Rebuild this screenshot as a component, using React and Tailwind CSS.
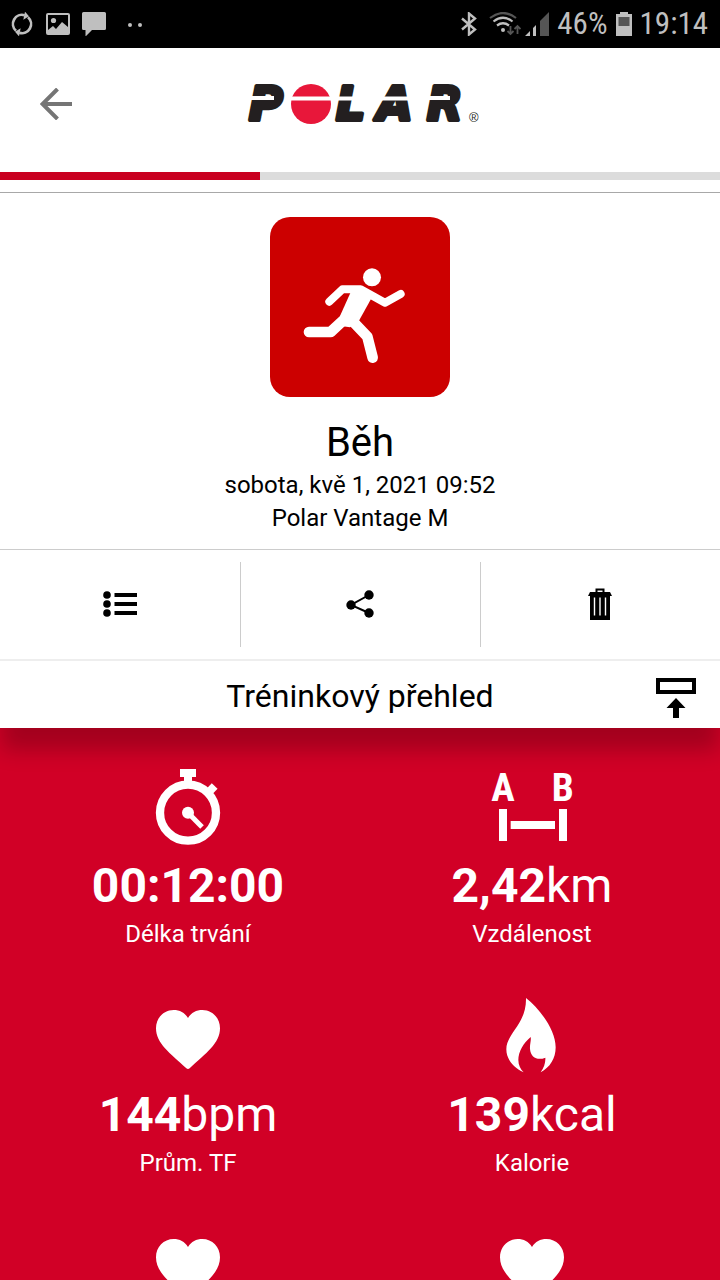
const NARROW = "'Roboto Condensed', 'Liberation Sans Narrow', Roboto, sans-serif";

const metrics = [
  { id: 'duration', icon: StopwatchIcon, value: '00:12:00', unit: '', label: 'Délka trvání' },
  { id: 'distance', icon: DistanceIcon, value: '2,42', unit: 'km', label: 'Vzdálenost' },
  { id: 'avg-hr', icon: HeartIcon, value: '144', unit: 'bpm', label: 'Prům. TF' },
  { id: 'calories', icon: FlameIcon, value: '139', unit: 'kcal', label: 'Kalorie' },
  { id: 'max-hr', icon: HeartIcon, value: '', unit: '', label: '' },
  { id: 'min-hr', icon: HeartIcon, value: '', unit: '', label: '' },
];

function StopwatchIcon() {
  return (
    <svg className="size-20" viewBox="24 51 240 240" fill="none" stroke="white" aria-hidden="true">
      <circle cx="144" cy="188" r="84" strokeWidth="25" />
      <path d="M120 57h48v24h-12v20h-24V81h-12z" fill="white" stroke="none" />
      <path d="M201 132l23-24" strokeWidth="24" />
      <circle cx="144" cy="188" r="18" fill="white" stroke="none" />
      <path d="M144 188l42 43" strokeWidth="15" />
    </svg>
  );
}

function DistanceIcon() {
  return (
    <svg className="size-20 overflow-visible" viewBox="66 51 240 240" fill="white" aria-hidden="true">
      <g fontFamily={NARROW} fontWeight="700" fontSize="118" textAnchor="middle">
        <text x="99" y="153">A</text>
        <text x="278" y="153">B</text>
      </g>
      <path d="M87 177h24v96H87zM267 177h24v96h-24zM122 213h133v24H122z" />
    </svg>
  );
}

function HeartIcon() {
  return (
    <svg className="size-20" viewBox="24 48 240 240" fill="white" aria-hidden="true">
      <path d="M144 114C134 98 119 90 101 90C71 90 48 114 48 145C48 190 90 220 139 265Q144 269 149 265C198 220 240 190 240 145C240 114 217 90 187 90C169 90 154 98 144 114Z" />
    </svg>
  );
}

function FlameIcon() {
  return (
    <svg className="size-20" viewBox="36 48 240 240" fill="white" aria-hidden="true">
      <path d="M138 54C178 86 227 148 227 202C227 236 210 262 182 277C192 262 197 248 196 233C174 242 152 234 150 207C149 193 154 182 152 171C130 190 115 215 115 240C115 256 122 268 131 277C100 262 79 238 79 208C79 160 140 132 138 54Z" />
    </svg>
  );
}

function StatusBar() {
  return (
    <div className="flex h-12 shrink-0 items-center justify-between bg-black pl-2.5 pr-3 text-[#bfbfbf]">
      <div className="flex items-center gap-3">
        <svg className="size-6" viewBox="30 39 72 72" fill="none" stroke="currentColor" strokeWidth="8" aria-hidden="true">
          <path d="M48 95A27 27 0 0 1 74 49M84 55A27 27 0 0 1 58 101" />
          <path d="M75 38l12 14-17 10zM57 112L45 98l17-10z" fill="currentColor" stroke="none" />
        </svg>
        <svg className="size-6" viewBox="0 0 24 24" fill="none" aria-hidden="true">
          <rect x="1" y="2" width="22" height="20" rx="1" stroke="currentColor" strokeWidth="2" />
          <circle cx="7.500" cy="8.500" r="2.600" fill="currentColor" />
          <path d="M2 18l5-4 3 3 6-7 6 5v6H2z" fill="currentColor" />
        </svg>
        <svg className="size-6" viewBox="0 0 24 24" fill="currentColor" aria-hidden="true">
          <path d="M1.500 0h21Q24 0 24 1.500v15Q24 18 22.500 18H10l-6.500 6.500V18h-2Q0 18 0 16.500v-15Q0 0 1.500 0z" />
        </svg>
        <svg className="ml-2 h-6 w-4" viewBox="0 0 16 24" fill="currentColor" aria-hidden="true">
          <circle cx="4" cy="13" r="2" />
          <circle cx="14" cy="13" r="2" />
        </svg>
      </div>
      <div className="flex items-center gap-2 text-[31px] leading-9" style={{ fontFamily: NARROW }}>
        <svg className="h-6 w-4" viewBox="0 0 16 24" fill="none" stroke="currentColor" strokeWidth="2.4" aria-hidden="true">
          <path d="M1 6.500L14 17.500 8 22.500V1.500L14 6.500 1 17.500" />
        </svg>
        <svg className="ml-1 h-6 w-8" viewBox="0 0 32 24" fill="none" stroke="currentColor" strokeWidth="2.200" aria-hidden="true">
          <path d="M1 6Q14 -4 27 6" stroke="#555" />
          <path d="M4.500 9.500Q14 2 23.500 9.500M8 13.500Q14 9 20 13.500" />
          <circle cx="14" cy="18" r="2" fill="currentColor" stroke="none" />
          <path d="M21.500 14v8M18.500 19l3 3 3-3M28.500 22v-8M25.500 17l3-3 3 3" stroke="#555" strokeWidth="1.800" />
        </svg>
        <svg className="-ml-1 h-6 w-6" viewBox="0 0 24 24" fill="currentColor" aria-hidden="true">
          <path d="M0 24l5-5v5zM8 16l3-3v11H8z" />
          <path d="M15 9l9-9v24h-9z" fill="#555" />
        </svg>
        <span>46%</span>
        <svg className="h-6 w-4" viewBox="0 0 16 24" fill="currentColor" aria-hidden="true">
          <path d="M4 0h8v2h4v22H0V2h4z" />
          <path d="M2.500 5h11v9h-11z" fill="#555" />
        </svg>
        <span>19:14</span>
      </div>
    </div>
  );
}

function Logo() {
  return (
    <svg className="h-10 w-60 overflow-visible" viewBox="0 0 240 40" role="img" aria-label="Polar">
      <g
        fontFamily="'DejaVu Sans', sans-serif"
        fontWeight="700"
        fontStyle="italic"
        fontSize="46"
        fill="#231f20"
        stroke="#231f20"
        strokeWidth="4"
        strokeLinejoin="round"
      >
        <text x="9" y="36">P</text>
        <text x="96" y="36">L</text>
        <text x="137" y="36">A</text>
        <text x="187" y="36">R</text>
      </g>
      <circle cx="71" cy="20" r="20" fill="#e8173a" />
      <path d="M0 12h34v4H0zM51 12.500h81v4H51zM132 12.500h48v4h-48zM180 12h30v4h-30z" fill="white" />
      <text x="229" y="37.500" fontFamily="'Liberation Sans', sans-serif" fontSize="13" fill="#231f20">®</text>
    </svg>
  );
}

function Header() {
  return (
    <header className="grid grid-cols-[1fr_auto_1fr] items-center px-10 pb-11 pt-8">
      <button type="button" aria-label="Zpět" className="flex h-12 w-8 items-center text-[#757575]">
        <svg className="size-8" viewBox="0 0 32 32" fill="none" stroke="currentColor" strokeWidth="4" aria-hidden="true">
          <path d="M17.500 1L2.500 16l15 15M2.500 16H32" />
        </svg>
      </button>
      <Logo />
    </header>
  );
}

function SyncProgress({ percent }) {
  return (
    <div
      role="progressbar"
      aria-label="Synchronizace"
      aria-valuenow={percent}
      aria-valuemin={0}
      aria-valuemax={100}
      className="h-2 bg-[#dcdcdc]"
    >
      <div className="h-full bg-[#c90020]" style={{ width: `${percent}%` }} />
    </div>
  );
}

function SessionSummary() {
  return (
    <section className="mt-3 flex flex-col items-center border-y border-t-[#a8a8a8] border-b-[#cccccc] pb-[14px] pt-6 text-center">
      <div className="size-[180px] overflow-hidden rounded-[20px] bg-[#cc0000]">
        <svg className="size-full" viewBox="30 21 540 540" fill="none" stroke="white" strokeLinecap="round" aria-hidden="true">
          <circle cx="336" cy="202" r="27" fill="white" stroke="none" />
          <path d="M208 275L247 238H302L375 278L422 252" strokeWidth="24" strokeLinejoin="round" />
          <path d="M275 240L305 228L338 258L296 334L270 352L248 349L240 318Z" fill="white" stroke="none" />
          <path d="M147 366H212L256 325M282 338L322 380L338 443" strokeWidth="32" strokeLinejoin="round" />
        </svg>
      </div>
      <h1 className="mb-[2px] mt-[22px] text-[40px] leading-[48px]">Běh</h1>
      <p className="text-2xl leading-[33px]">sobota, kvě 1, 2021 09:52</p>
      <p className="text-2xl leading-[33px]">Polar Vantage M</p>
    </section>
  );
}

function SessionActions() {
  return (
    <div className="grid grid-cols-3 border-b-2 border-[#eeeeee] py-3">
      <button type="button" aria-label="Podrobnosti" className="flex h-[85px] items-center justify-center pb-0.5">
        <svg className="h-7 w-[34px]" viewBox="0 0 34 28" aria-hidden="true">
          <circle cx="4" cy="5" r="3.800" />
          <circle cx="4" cy="14" r="3.800" />
          <circle cx="4" cy="23" r="3.800" />
          <path d="M11.500 3H34v4H11.500zM11.500 12H34v4H11.500zM11.500 21H34v4H11.500z" />
        </svg>
      </button>
      <button
        type="button"
        aria-label="Sdílet"
        className="flex h-[85px] items-center justify-center border-l border-[#cccccc] pb-0.5 pr-0.5"
      >
        <svg className="size-7" viewBox="0 0 28 28" aria-hidden="true">
          <path d="M23 5L5 15l18 8" fill="none" stroke="black" strokeWidth="2" />
          <circle cx="5" cy="15" r="4.700" />
          <circle cx="23" cy="5" r="4.700" />
          <circle cx="23" cy="23" r="4.700" />
        </svg>
      </button>
      <button
        type="button"
        aria-label="Smazat"
        className="flex h-[85px] items-center justify-center border-l border-[#cccccc] pb-0.5 pr-0.5"
      >
        <svg className="h-8 w-6" viewBox="0 0 24 32" aria-hidden="true">
          <path d="M8.500 5V1.500h7V5" fill="none" stroke="black" strokeWidth="2" />
          <path d="M2 4h20l2 4h-2v24H2V8H0z" />
          <path d="M6.500 9.500v18M12 9.500v18M17.500 9.500v18" stroke="white" strokeWidth="1.400" />
        </svg>
      </button>
    </div>
  );
}

function OverviewHeading() {
  return (
    <div className="grid h-[67px] grid-cols-[1fr_auto_1fr] items-center px-6 pt-0.5">
      <h2 className="col-start-2 text-[32px] leading-10">Tréninkový přehled</h2>
      <button type="button" aria-label="Sbalit přehled" className="ml-auto mt-1">
        <svg className="size-10" viewBox="0 0 40 40" aria-hidden="true">
          <rect x="2" y="2" width="36" height="12" fill="none" stroke="black" strokeWidth="4" />
          <path d="M20 20l9.500 10H23v10h-6V30h-6.500z" />
        </svg>
      </button>
    </div>
  );
}

function Metric({ icon: Icon, value, unit, label }) {
  return (
    <div className="flex h-[181px] flex-col items-center">
      <Icon />
      <p className="mt-[11px] text-5xl leading-[56px]">
        <strong className="font-bold">{value}</strong>
        {unit}
      </p>
      <p className="mt-[6px] text-2xl leading-7">{label}</p>
    </div>
  );
}

export default function App() {
  return (
    <div className="flex h-screen flex-col overflow-hidden bg-[#d10026] font-['Roboto','Noto_Sans',sans-serif] text-black">
      <StatusBar />
      <main className="flex min-h-0 flex-1 flex-col">
        <div className="z-10 shrink-0 bg-white shadow-[0_24px_20px_-2px_rgba(0,0,0,0.22)]">
          <Header />
          <SyncProgress percent={36.1} />
          <SessionSummary />
          <SessionActions />
          <OverviewHeading />
        </div>
        <section className="z-20 grid min-h-0 flex-1 grid-cols-2 content-start gap-y-12 overflow-hidden px-4 pt-[39px] text-white">
          {metrics.map((metric) => (
            <Metric key={metric.id} {...metric} />
          ))}
        </section>
      </main>
    </div>
  );
}
